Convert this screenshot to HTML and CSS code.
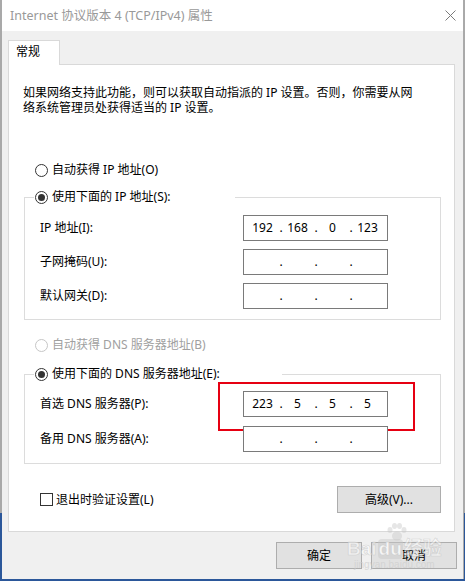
FILE: index.html
```html
<!DOCTYPE html>
<html lang="zh-CN">
<head>
<meta charset="utf-8">
<title>Internet 协议版本 4 (TCP/IPv4) 属性</title>
<link rel="stylesheet" href="styles.css">
</head>
<body>
<div class="window">
  <div class="titlebar">
    <span class="title">Internet 协议版本 4 (TCP/IPv4) 属性</span>
    <svg class="close" width="11" height="11" viewBox="0 0 11 11"><path d="M0.5 0.5 L10.5 10.5 M10.5 0.5 L0.5 10.5" stroke="#7a7a7a" stroke-width="1" fill="none"/></svg>
  </div>
  <div class="content">
    <div class="tabs"><div class="tab">常规</div></div>
    <div class="panel">
      <p class="desc">如果网络支持此功能，则可以获取自动指派的 IP 设置。否则，你需要从网<br>络系统管理员处获得适当的 IP 设置。</p>

      <div class="radio-row first"><span class="radio"></span><span>自动获得 IP 地址(O)</span></div>

      <fieldset class="group g1">
        <legend class="legend l1"><span class="radio checked"></span><span>使用下面的 IP 地址(S):</span></legend>
        <div class="rows r1">
          <div class="row"><span>IP 地址(I):</span>
            <div class="ip"><span class="seg">192</span><span class="dot">.</span><span class="seg">168</span><span class="dot">.</span><span class="seg">0</span><span class="dot">.</span><span class="seg">123</span></div>
          </div>
          <div class="row"><span>子网掩码(U):</span>
            <div class="ip"><span class="seg"></span><span class="dot">.</span><span class="seg"></span><span class="dot">.</span><span class="seg"></span><span class="dot">.</span><span class="seg"></span></div>
          </div>
          <div class="row"><span>默认网关(D):</span>
            <div class="ip"><span class="seg"></span><span class="dot">.</span><span class="seg"></span><span class="dot">.</span><span class="seg"></span><span class="dot">.</span><span class="seg"></span></div>
          </div>
        </div>
      </fieldset>

      <div class="radio-row dns-auto disabled"><span class="radio"></span><span>自动获得 DNS 服务器地址(B)</span></div>

      <fieldset class="group g2">
        <legend class="legend l2"><span class="radio checked"></span><span>使用下面的 DNS 服务器地址(E):</span></legend>
        <div class="rows r2">
          <div class="row"><span>首选 DNS 服务器(P):</span>
            <div class="ip highlight"><span class="seg">223</span><span class="dot">.</span><span class="seg">5</span><span class="dot">.</span><span class="seg">5</span><span class="dot">.</span><span class="seg">5</span></div>
          </div>
          <div class="row"><span>备用 DNS 服务器(A):</span>
            <div class="ip"><span class="seg"></span><span class="dot">.</span><span class="seg"></span><span class="dot">.</span><span class="seg"></span><span class="dot">.</span><span class="seg"></span></div>
          </div>
        </div>
      </fieldset>

      <div class="bottom-row">
        <label class="check-row"><span class="checkbox"></span><span>退出时验证设置(L)</span></label>
        <button class="btn adv">高级(V)...</button>
      </div>
    </div>
    <div class="footer">
      <button class="btn ok">确定</button>
      <button class="btn cancel">取消</button>
      <div class="watermark">
        <svg class="paw" width="22" height="18" viewBox="0 0 22 18"><g fill="rgba(200,200,200,0.45)"><ellipse cx="4" cy="7" rx="2.5" ry="3"/><ellipse cx="8.5" cy="3" rx="2.5" ry="3"/><ellipse cx="13.5" cy="3" rx="2.5" ry="3"/><ellipse cx="18" cy="7" rx="2.5" ry="3"/><ellipse cx="11" cy="13" rx="5" ry="4.5"/></g></svg>
        <span class="wm-main">Bai<span class="wm-du">du</span>经验</span>
        <span class="wm-url">jingyan.baidu.com</span>
      </div>
    </div>
  </div>
</div>
</body>
</html>
```
FILE: styles.css
```css
* { box-sizing: border-box; }
html, body { margin: 0; padding: 0; }
body {
  width: 465px;
  height: 581px;
  overflow: hidden;
  background: linear-gradient(to bottom, #a9a9a9 0, #a9a9a9 513px, #2b579a 513px, #2b579a 100%);
  font-family: "Noto Sans", "Noto Sans CJK SC", sans-serif;
  font-size: 12px;
  line-height: 16px;
  color: #000;
}
.window {
  margin-left: 2px;
  width: 462px;
  height: 579px;
  background: #f0f0f0;
  border-right: 1px solid #aaaaaa;
  display: flex;
  flex-direction: column;
}
.titlebar {
  height: 31px;
  background: #fff;
  display: flex;
  align-items: center;
  justify-content: space-between;
  padding: 0 7px 0 8px;
  flex: none;
}
.title { color: #999999; font-size: 12.5px; }
.close { margin-top: -1px; }
.content {
  padding: 9px 7px 0 6px;
  display: flex;
  flex-direction: column;
}
.tabs { display: flex; }
.tab {
  position: relative;
  z-index: 1;
  width: 52px;
  height: 25px;
  margin-bottom: -1px;
  background: #fff;
  border: 1px solid #d9d9d9;
  border-bottom: none;
  padding: 3px 0 0 7px;
}
.panel {
  width: 447px;
  height: 468px;
  background: #fff;
  border: 1px solid #d9d9d9;
  display: flex;
  flex-direction: column;
}
.desc {
  margin: 20px 0 0 14px;
  line-height: 15px;
  white-space: nowrap;
}
.radio-row {
  display: flex;
  align-items: center;
  gap: 4px;
  height: 16px;
  margin-left: 26px;
}
.radio-row.first { margin-top: 47px; }
.radio-row.dns-auto { margin-top: 17px; }
.disabled { color: #a0a0a0; }
.radio {
  width: 13px;
  height: 13px;
  border: 1px solid #333;
  border-radius: 50%;
  display: inline-flex;
  align-items: center;
  justify-content: center;
  background: #fff;
  flex: none;
}
.disabled .radio { border-color: #c6c6c6; }
.radio.checked::after {
  content: "";
  width: 7px;
  height: 7px;
  border-radius: 50%;
  background: #333;
}
.group {
  margin: 0 0 0 15px;
  width: 417px;
  border: 1px solid #dcdcdc;
  padding: 0 52px 10px 15px;
  min-width: 0;
}
.g1 { margin-top: 11px; }
.g2 { margin-top: 13px; padding-bottom: 11px; }
.legend {
  margin-left: -6px;
  padding: 0 0 0 1px;
  height: 16px;
  display: flex;
  align-items: center;
  gap: 4px;
  background: #fff;
}
.l1 { width: 201px; }
.l2 { width: 248px; }
.rows { display: flex; flex-direction: column; gap: 8px; }
.r1 { padding-top: 10px; }
.r2 { padding-top: 9px; gap: 9px; }
.row {
  display: flex;
  align-items: center;
  justify-content: space-between;
  height: 26px;
}
.ip {
  position: relative;
  width: 145px;
  height: 26px;
  border: 1px solid #7a7a7a;
  padding-left: 3px;
  display: flex;
  align-items: center;
  background: #fff;
}
.seg { width: 31px; text-align: center; }
.dot { width: 4px; text-align: center; margin-left: 1px; margin-right: -1px; }
.highlight::before {
  content: "";
  position: absolute;
  left: -26px;
  top: -10px;
  width: 193px;
  height: 45px;
  border: 2px solid #e60012;
}
.bottom-row {
  margin: 22px 13px 0 31px;
  display: flex;
  justify-content: space-between;
  align-items: center;
}
.check-row {
  display: flex;
  align-items: center;
  gap: 3px;
}
.checkbox {
  width: 13px;
  height: 13px;
  border: 1px solid #333;
  background: #fff;
}
.btn {
  font-family: inherit;
  font-size: 12px;
  line-height: 16px;
  color: #000;
  background: #e1e1e1;
  border: 1px solid #adadad;
  padding: 0;
  margin: 0;
}
.adv { width: 104px; height: 27px; }
.footer {
  position: relative;
  margin-top: 10px;
  display: flex;
  justify-content: flex-end;
  gap: 9px;
  margin-right: -1px;
}
.ok, .cancel { width: 86px; height: 27px; }
.watermark {
  position: absolute;
  left: 339px;
  top: -19px;
  display: flex;
  flex-direction: column;
  align-items: center;
  pointer-events: none;
}
.paw { margin-left: 6px; margin-bottom: -2px; }
.wm-main {
  font-family: "Liberation Sans", "Noto Sans CJK SC", sans-serif;
  font-weight: bold;
  font-size: 19px;
  line-height: 20px;
  color: rgba(255,255,255,0.5);
  -webkit-text-stroke: 0.6px rgba(190,190,190,0.6);
  white-space: nowrap;
}
.wm-du {
  display: inline-block;
  background: rgba(200,200,200,0.45);
  color: rgba(255,255,255,0.8);
  border-radius: 4px;
  padding: 0 1px;
  margin: 0 1px;
}
.wm-url {
  font-family: "Liberation Sans", sans-serif;
  font-size: 10px;
  line-height: 11px;
  color: rgba(205,205,205,0.7);
}
```
